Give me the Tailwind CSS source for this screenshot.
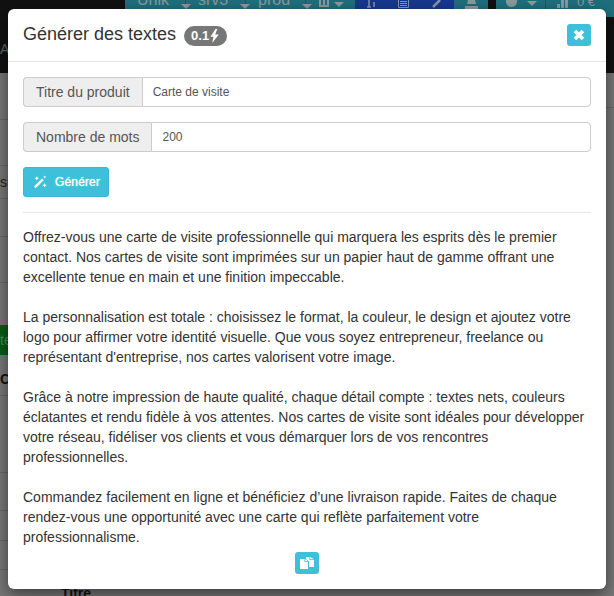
<!DOCTYPE html>
<html lang="fr">
<head>
  <meta charset="UTF-8">
  <title>Générer des textes</title>
  <script src="https://cdn.jsdelivr.net/npm/@tailwindcss/browser@4"></script>
</head>
<body class="bg-[#777] font-['Liberation_Sans',sans-serif] text-sm text-[#333] overflow-hidden">
  <div class="relative h-[596px] w-[614px] overflow-hidden">
    <!-- barre du haut, derrière la modale -->
    <div class="relative h-[73px] bg-[#111] flex justify-end items-start">
      <div class="flex h-[17px] w-[230px] bg-[#1f6f7d] text-[#8a9a9c] text-base leading-[14px]">
        <span class="w-[61px] pl-3 border-r border-[#185a66] flex gap-3 items-start -mt-[7px]">Unik<i class="mt-[11px] w-0 h-0 border-x-[5px] border-t-[5px] border-x-transparent border-t-[#8a9a9c]"></i></span>
        <span class="w-[60px] pl-3 border-r border-[#185a66] flex gap-3 items-start -mt-[7px]">srv3<i class="mt-[11px] w-0 h-0 border-x-[5px] border-t-[5px] border-x-transparent border-t-[#8a9a9c]"></i></span>
        <span class="w-[60px] pl-3 border-r border-[#185a66] flex gap-3 items-start -mt-[7px]">prod<i class="mt-[11px] w-0 h-0 border-x-[5px] border-t-[5px] border-x-transparent border-t-[#8a9a9c]"></i></span>
        <span class="flex-1 pl-[13px] flex gap-[5px] items-start">
          <svg class="w-[10px] h-[7px]" viewBox="0 0 10 7" fill="none" stroke="#8a9a9c" stroke-width="2"><path d="M1 0v6h8V0M5 0v6"/></svg>
          <i class="mt-[2px] w-0 h-0 border-x-[5px] border-t-[5px] border-x-transparent border-t-[#8a9a9c]"></i>
        </span>
      </div>
      <div class="flex justify-around items-start w-[99px] h-[17px] bg-[#17388f]">
        <svg class="w-[10px] h-[8px]" viewBox="0 0 10 8" fill="none" stroke="#8a93ad" stroke-width="1.500"><path d="M3 0v7M1 7h4M8 2v5"/></svg>
        <svg class="w-[11px] h-[8px]" viewBox="0 0 11 8" fill="none" stroke="#8a93ad"><path d="M.5 0v7.500h10V0M2 1.500h7M2 3.500h7M2 5.500h7"/></svg>
        <svg class="w-[12px] h-[8px]" viewBox="0 0 12 8" fill="none" stroke="#8a93ad" stroke-width="2.500"><path d="M9 0 2 7"/></svg>
      </div>
      <div class="flex justify-center w-[34px] h-[17px] bg-[#1f6f7d]">
        <svg class="w-[13px] h-[9px]" viewBox="0 0 13 9" fill="#8a9a9c"><path d="M3 0h7l1 4H2zM0 6h13v3H0z"/></svg>
      </div>
      <div class="w-[8px] h-[17px]"></div>
      <div class="flex items-start w-[118px] h-[17px] pl-[10px] bg-[#1f6f7d] text-[#8a9a9c] text-[13px] leading-[10px]">
        <i class="w-[11px] h-[7px] rounded-b-full bg-[#8a9a9c]"></i>
        <i class="ml-[10px] mt-[1px] w-0 h-0 border-x-[5px] border-t-[5px] border-x-transparent border-t-[#8a9a9c]"></i>
        <i class="ml-[8px] w-px h-[17px] bg-[#185a66]"></i>
        <svg class="ml-[11px] w-[11px] h-[8px]" viewBox="0 0 11 8" fill="#8a9a9c"><path d="M0 4h3v4H0zM4 0h3v8H4zM8 0h3v8H8z"/></svg>
        <span class="ml-[9px] -mt-[3px]">0 €</span>
      </div>
      <span class="absolute left-0 top-[39px] text-[#666]">Ac</span>
    </div>
    <!-- lignes du tableau visibles à gauche -->
    <div class="w-[8px] overflow-hidden">
      <div class="h-[47px] border-b border-[#666]"></div>
      <div class="h-[46px] border-b border-[#666]"></div>
      <div class="h-[33px] border-b border-[#666] pt-1.5 text-[#222] leading-5">si</div>
      <div class="h-[38px] border-b border-[#666]"></div>
      <div class="h-[46px] border-b border-[#666]"></div>
      <div class="h-[30px] mt-[42px] bg-[#0a5c16] text-[#4a8a55] leading-[30px]">te</div>
      <div class="h-[41px] border-b border-[#666] pt-4 font-bold text-[#111] leading-4">C</div>
      <div class="h-[77px] border-b border-[#666]"></div>
      <div class="h-[38px] border-b border-[#666]"></div>
      <div class="h-[30px] border-b border-[#666]"></div>
      <div class="h-[29px] border-b border-[#666]"></div>
    </div>
    <div class="absolute right-0 top-[107px] w-[8px] border-b border-[#666]"></div>
    <span class="absolute left-[61px] top-[583px] font-bold text-[#111]">Titre</span>

    <!-- modale -->
    <div class="absolute left-2 top-[9px] w-[598px] h-[580px] bg-white rounded-md shadow-[0_5px_15px_rgba(0,0,0,0.5)]">
      <div class="flex items-center justify-between h-[53px] px-[15px] border-b border-[#e5e5e5]">
        <h4 class="flex items-center -mt-[2px] text-[18px] leading-[20px]">
          Générer des textes
          <span class="ml-2 mt-1 flex items-center h-5 px-[7px] rounded-[10px] bg-[#777] text-white text-[13px] font-bold">0.1<svg class="w-[11px] h-[14px]" viewBox="0 0 11 14" fill="#fff"><path d="M6.500 0 1.500 7.800h3L3.200 14 9.800 5.600H6.200L8.300 0z"/></svg></span>
        </h4>
        <button class="flex items-center justify-center w-6 h-[22px] bg-[#3fc0da] rounded-[3px]">
          <svg class="w-3 h-3" viewBox="0 0 12 12" fill="none" stroke="#fff" stroke-width="3.600"><path d="M2 2l8 8M10 2l-8 8"/></svg>
        </button>
      </div>
      <div class="px-[15px] pt-[15px]">
        <div class="flex h-[30px] text-[#555]">
          <span class="flex items-center px-3 bg-[#eee] border border-[#ccc] rounded-l-[4px] border-r-0 text-sm">Titre du produit</span>
          <div class="flex-1 flex items-center px-2.5 bg-white border border-[#ccc] rounded-r-[4px] text-xs">Carte de visite</div>
        </div>
        <div class="flex h-[30px] mt-[15px] text-[#555]">
          <span class="flex items-center px-3 bg-[#eee] border border-[#ccc] rounded-l-[4px] border-r-0 text-sm">Nombre de mots</span>
          <div class="flex-1 flex items-center px-2.5 bg-white border border-[#ccc] rounded-r-[4px] text-xs">200</div>
        </div>
        <button class="flex items-center h-[30px] w-[86px] mt-[15px] pl-[9px] bg-[#3fc0da] border border-[#39b3d7] rounded-[3px] text-white text-xs tracking-[0.15px] [text-shadow:0_0_1px_#fff]">
          <svg class="w-[14px] h-[14px] mr-[8px]" viewBox="0 0 14 14" fill="#fff"><path d="M1 11.600 9 3.600l1.700 1.700-8 8z"/><path d="M3.800 1l.7 1.500 1.500.7-1.500.7-.7 1.500-.7-1.500-1.500-.7 1.500-.7zM11.500 8l.7 1.500 1.500.7-1.500.7-.7 1.500-.7-1.500-1.500-.7 1.500-.7zM11.800 0.500l.5 1 1 .5-1 .5-.5 1-.5-1-1-.5 1-.5z"/></svg>
          Générer
        </button>
        <hr class="mt-[15px] mb-[14px] border-[#e5e5e5]">
        <div class="leading-5 space-y-5">
          <p>Offrez-vous une carte de visite professionnelle qui marquera les esprits dès le premier contact. Nos cartes de visite sont imprimées sur un papier haut de gamme offrant une excellente tenue en main et une finition impeccable.</p>
          <p>La personnalisation est totale : choisissez le format, la couleur, le design et ajoutez votre logo pour affirmer votre identité visuelle. Que vous soyez entrepreneur, freelance ou représentant d'entreprise, nos cartes valorisent votre image.</p>
          <p>Grâce à notre impression de haute qualité, chaque détail compte : textes nets, couleurs éclatantes et rendu fidèle à vos attentes. Nos cartes de visite sont idéales pour développer votre réseau, fidéliser vos clients et vous démarquer lors de vos rencontres professionnelles.</p>
          <p>Commandez facilement en ligne et bénéficiez d’une livraison rapide. Faites de chaque rendez-vous une opportunité avec une carte qui reflète parfaitement votre professionnalisme.</p>
        </div>
        <div class="flex justify-center mt-[5px]">
          <button class="flex items-center justify-center w-6 h-[22px] bg-[#3fc0da] rounded-[3px]">
            <svg class="w-[14px] h-3" viewBox="0 0 14 12" fill="#fff"><path d="M0 2h4.500v3H8v7H0z"/><path d="M5.300 2 8 4.300H5.300z"/><path d="M6 0h3.500v3H14v7H9V4.500L6 2z"/><path d="M10.300 0 14 2.300h-3.700z"/></svg>
          </button>
        </div>
      </div>
    </div>
  </div>
</body>
</html>
